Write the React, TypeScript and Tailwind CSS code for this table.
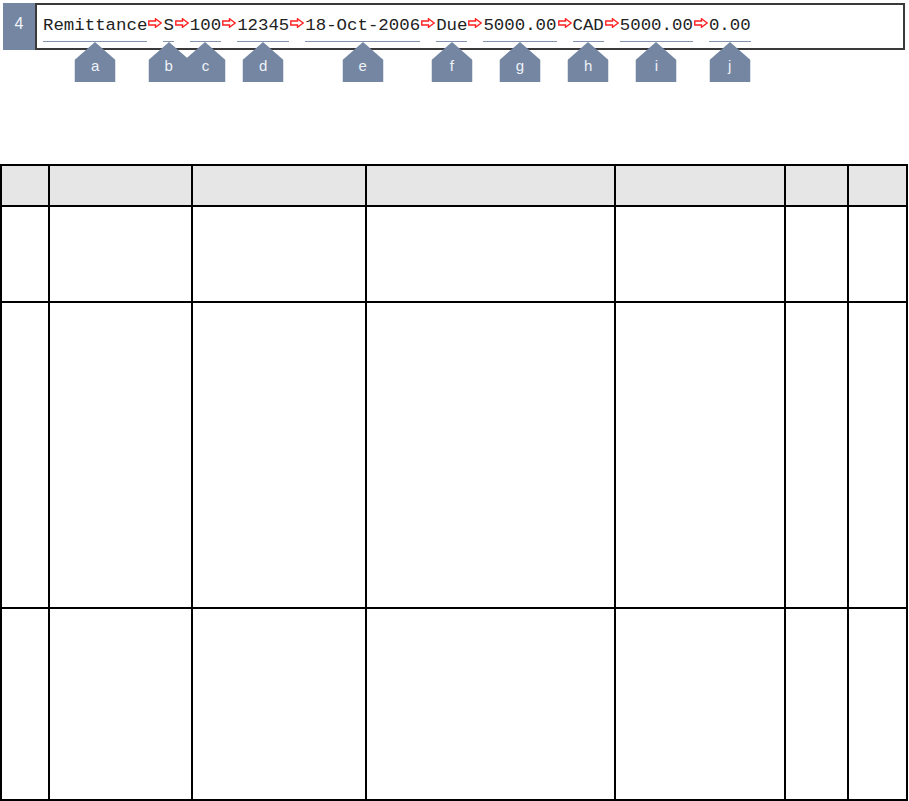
import React from "react";

const tokens: { text: string; label: string }[] = [
  { text: "Remittance", label: "a" },
  { text: "S", label: "b" },
  { text: "100", label: "c" },
  { text: "12345", label: "d" },
  { text: "18-Oct-2006", label: "e" },
  { text: "Due", label: "f" },
  { text: "5000.00", label: "g" },
  { text: "CAD", label: "h" },
  { text: "5000.00", label: "i" },
  { text: "0.00", label: "j" },
];

function Arrow() {
  return (
    <svg width="14" height="10" viewBox="0 0 14 10" className="mx-px mt-[2px] shrink-0">
      <polygon
        points="0.8,3 7.5,3 7.5,0.8 13.2,5 7.5,9.2 7.5,7 0.8,7"
        fill="#ffffff"
        stroke="#ff1f1f"
        strokeWidth="1.4"
        strokeLinejoin="miter"
      />
    </svg>
  );
}

function Callout({ label }: { label: string }) {
  return (
    <div className="absolute top-[26px] left-1/2 -translate-x-1/2 w-[41px] h-[40px] z-10">
      <svg width="41" height="40" viewBox="0 0 41 40" className="absolute inset-0">
        <polygon points="20.5,0 41,18 41,40 0,40 0,18" fill="#7486a2" />
      </svg>
      <div
        className="relative flex justify-center pt-[15px] text-[15px] leading-[17px] text-[#eef2f7]"
        style={{ fontFamily: '"Liberation Sans", Arial, sans-serif' }}
      >
        {label}
      </div>
    </div>
  );
}

function Token({ text, label }: { text: string; label: string }) {
  return (
    <span className="relative flex flex-col shrink-0">
      <span className="h-[20px] leading-[20px] whitespace-pre">{text}</span>
      <span className="mt-[5px] h-px bg-[#8493ad]" />
      <Callout label={label} />
    </span>
  );
}

const colW = "grid-cols-[48px_143px_174px_249px_170px_63px_59px]";

export default function App() {
  const rows = [0, 1, 2, 3];
  const cols = [0, 1, 2, 3, 4, 5, 6];
  return (
    <div className="w-[909px] h-[801px] bg-white overflow-hidden">
      <div className="h-[164px] pt-[3px] pl-[3px] flex items-start">
        <div
          className="w-[32px] h-[47px] bg-[#7486a2] flex justify-center pt-[12px] text-[16px] leading-[18px] text-[#f2f5fa]"
          style={{ fontFamily: '"Liberation Sans", Arial, sans-serif' }}
        >
          4
        </div>
        <div className="w-[870px] h-[47px] border-2 border-[#3a3a3a] bg-white">
          <div
            className="flex items-start pl-[6px] pt-[11px] text-[17.4px] text-[#222222]"
            style={{ fontFamily: '"Liberation Mono", "Courier New", monospace' }}
          >
            {tokens.map((t, i) => (
              <React.Fragment key={i}>
                {i > 0 && <Arrow />}
                <Token text={t.text} label={t.label} />
              </React.Fragment>
            ))}
          </div>
        </div>
      </div>
      <div
        className={`grid ${colW} grid-rows-[41px_96px_306px_192px] w-[908px] border-l-2 border-t-2 border-black`}
      >
        {rows.map((r) =>
          cols.map((c) => (
            <div
              key={`${r}-${c}`}
              className={`border-r-2 border-b-2 border-black ${r === 0 ? "bg-[#e6e6e6]" : "bg-white"}`}
            />
          ))
        )}
      </div>
    </div>
  );
}
